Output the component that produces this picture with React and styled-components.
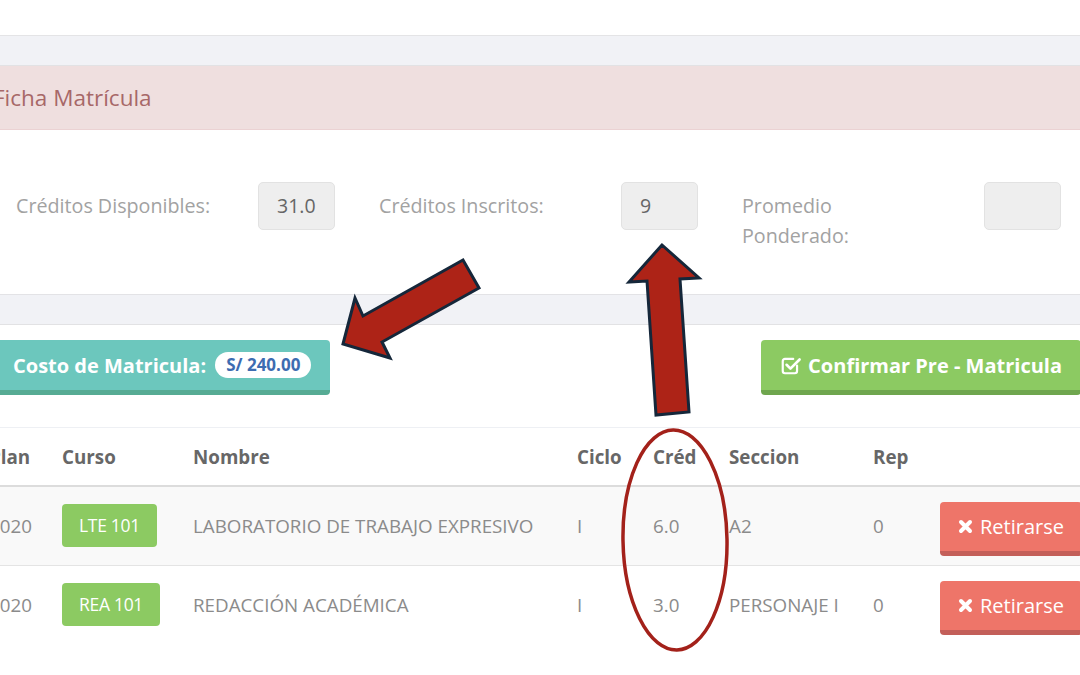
import React from "react";
import styled, { createGlobalStyle } from "styled-components";

const courses = [
  { plan: "2020", code: "LTE 101", name: "LABORATORIO DE TRABAJO EXPRESIVO", ciclo: "I", cred: "6.0", seccion: "A2", rep: "0" },
  { plan: "2020", code: "REA 101", name: "REDACCIÓN ACADÉMICA", ciclo: "I", cred: "3.0", seccion: "PERSONAJE I", rep: "0" },
];

const stats = [
  { label: "Créditos Disponibles:", value: "31.0" },
  { label: "Créditos Inscritos:", value: "9" },
  { label: "Promedio Ponderado:", value: "" },
];

const CheckSquare = () => (
  <svg width="22" height="22" viewBox="0 0 20 20" fill="none" stroke="#fff" strokeWidth="2" strokeLinecap="round" strokeLinejoin="round">
    <path d="M15.5 10.5 V15.5 a2 2 0 0 1 -2 2 H4.5 a2 2 0 0 1 -2 -2 V6.5 a2 2 0 0 1 2 -2 H12" />
    <path d="M6 9.8 L9.5 13.3 L17.8 5" strokeWidth="2.4" />
  </svg>
);

const Cross = () => (
  <svg width="15" height="15" viewBox="0 0 15 15" fill="none" stroke="#fff" strokeWidth="4" strokeLinecap="round">
    <path d="M3 3 L12 12 M12 3 L3 12" />
  </svg>
);

const App = () => {
  return (
    <>
      <GlobalStyle />
      <Page>
        <TopPanel />
        <Panel>
          <Heading>Ficha Matrícula</Heading>
          <Body>
            <StatsGrid>
              {stats.map((s) => (
                <StatGroup key={s.label}>
                  <StatLabel>{s.label}</StatLabel>
                  <StatBox>{s.value}</StatBox>
                </StatGroup>
              ))}
            </StatsGrid>
          </Body>
        </Panel>
        <Panel $last>
          <ButtonRow>
            <ActionButton $tone="teal">
              Costo de Matricula: <Pill>S/ 240.00</Pill>
            </ActionButton>
            <ActionButton $tone="green">
              <CheckSquare /> Confirmar Pre - Matricula
            </ActionButton>
          </ButtonRow>
          <Table>
            <colgroup>
              <col style={{ width: 73 }} />
              <col style={{ width: 131 }} />
              <col style={{ width: 384 }} />
              <col style={{ width: 76 }} />
              <col style={{ width: 76 }} />
              <col style={{ width: 144 }} />
              <col style={{ width: 67 }} />
              <col />
            </colgroup>
            <thead>
              <tr>
                <Th>Plan</Th>
                <Th>Curso</Th>
                <Th>Nombre</Th>
                <Th>Ciclo</Th>
                <Th>Créd</Th>
                <Th>Seccion</Th>
                <Th>Rep</Th>
                <Th />
              </tr>
            </thead>
            <tbody>
              {courses.map((c) => (
                <Row key={c.code}>
                  <Td>{c.plan}</Td>
                  <Td>
                    <CodeBadge>{c.code}</CodeBadge>
                  </Td>
                  <Td>{c.name}</Td>
                  <Td>{c.ciclo}</Td>
                  <Td>{c.cred}</Td>
                  <Td>{c.seccion}</Td>
                  <Td>{c.rep}</Td>
                  <ActionTd>
                    <RemoveButton>
                      <Cross /> Retirarse
                    </RemoveButton>
                  </ActionTd>
                </Row>
              ))}
            </tbody>
          </Table>
        </Panel>

        <Annotations width="1080" height="675" viewBox="0 0 1080 675">
          <polygon
            points="343,344 355,298 363,316 463,260 479,288 382,342 390,358"
            fill="#ad2317"
            stroke="#15273a"
            strokeWidth="3"
            strokeLinejoin="miter"
          />
          <polygon
            points="662,245 629,282 647,281 656,415 689,412 680,279 699,278"
            fill="#ad2317"
            stroke="#15273a"
            strokeWidth="3"
            strokeLinejoin="miter"
          />
          <ellipse cx="675" cy="540" rx="52" ry="110" fill="none" stroke="#a3211a" strokeWidth="3.5" transform="rotate(-1 675 540)" />
        </Annotations>
      </Page>
    </>
  );
};

export default App;

const GlobalStyle = createGlobalStyle`
  html, body {
    margin: 0;
    padding: 0;
    overflow: hidden;
    background: #f1f2f6;
  }
  body {
    font-family: "Open Sans", "Liberation Sans", sans-serif;
  }
`;

const Page = styled.div`
  position: relative;
  display: flex;
  flex-direction: column;
  width: 1080px;
  height: 675px;
  overflow: hidden;
  background: #f1f2f6;
`;

const TopPanel = styled.div`
  flex: none;
  height: 35px;
  background: #fff;
  border-bottom: 1px solid #e4e4e6;
`;

const Panel = styled.div`
  flex: ${(p) => (p.$last ? "1" : "none")};
  margin-top: 29px;
  background: #fff;
  border-top: 1px solid #e2e2e4;
  border-bottom: ${(p) => (p.$last ? "none" : "1px solid #e3e3e6")};
`;

const Heading = styled.div`
  height: 63px;
  line-height: 63px;
  background: #efdfdf;
  border-bottom: 1px solid #ebd2d3;
  color: #a76868;
  font-size: 22.5px;
  text-indent: -7px;
  white-space: nowrap;
`;

const Body = styled.div`
  height: 164px;
  box-sizing: border-box;
  padding: 52px 0 0 16px;
`;

const StatsGrid = styled.div`
  display: grid;
  grid-template-columns: repeat(3, 363px);
`;

const StatGroup = styled.div`
  display: grid;
  grid-template-columns: 197px 77px;
  column-gap: 45px;
  align-items: start;
`;

const StatLabel = styled.div`
  padding-top: 9px;
  font-size: 19.7px;
  line-height: 30px;
  color: #a2a2a2;
`;

const StatBox = styled.div`
  height: 48px;
  box-sizing: border-box;
  padding-left: 18px;
  line-height: 46px;
  background: #eeeeee;
  border: 1px solid #e2e2e2;
  border-radius: 5px;
  font-size: 19.5px;
  color: #666;
`;

const ButtonRow = styled.div`
  display: flex;
  justify-content: space-between;
  align-items: flex-start;
  width: 1087px;
  margin-left: -6px;
  padding-top: 15px;
  height: 87px;
`;

const tones = {
  teal: { face: "#6cc7bd", shade: "#56ab94" },
  green: { face: "#8cca62", shade: "#6fa64e" },
};

const ActionButton = styled.div`
  display: flex;
  align-items: center;
  gap: 6px;
  height: 50px;
  padding: 0 19px;
  background: ${(p) => tones[p.$tone].face};
  border-bottom: 5px solid ${(p) => tones[p.$tone].shade};
  border-radius: 4px;
  color: #fff;
  font-size: 20px;
  font-weight: 700;
  white-space: nowrap;
`;

const Pill = styled.span`
  display: inline-block;
  margin-left: 3px;
  padding: 0 11px;
  height: 26px;
  line-height: 26px;
  background: #fff;
  border-radius: 13px;
  color: #3d6cb1;
  font-size: 17px;
  font-weight: 700;
`;

const Table = styled.table`
  width: 1100px;
  margin-left: -11px;
  border-collapse: collapse;
  table-layout: fixed;
`;

const Th = styled.th`
  height: 57px;
  padding: 0;
  text-align: left;
  vertical-align: middle;
  border-top: 1px solid #eef0f4;
  border-bottom: 2px solid #dcdcdc;
  color: #676767;
  font-size: 18.8px;
  font-weight: 700;
  white-space: nowrap;
`;

const Row = styled.tr`
  height: 79px;
  &:nth-child(odd) {
    background: #f9f9f9;
  }
  & + & > td {
    border-top: 1px solid #e4e4e4;
  }
`;

const Td = styled.td`
  padding: 0;
  vertical-align: middle;
  color: #8b8b8b;
  font-size: 18.8px;
  white-space: nowrap;
  overflow: visible;
`;

const ActionTd = styled(Td)`
  padding-top: 6px;
`;

const CodeBadge = styled.span`
  display: inline-block;
  padding: 9px 17px;
  line-height: 25px;
  background: #8cca62;
  border-radius: 4px;
  color: #fff;
  font-size: 17.5px;
  letter-spacing: -0.3px;
`;

const RemoveButton = styled.div`
  display: inline-flex;
  align-items: center;
  gap: 7px;
  height: 49px;
  padding: 0 18px;
  background: #ee7569;
  border-bottom: 5px solid #c35f59;
  border-radius: 4px;
  color: #fff;
  font-size: 20px;
`;

const Annotations = styled.svg`
  position: absolute;
  top: 0;
  left: 0;
  pointer-events: none;
`;
